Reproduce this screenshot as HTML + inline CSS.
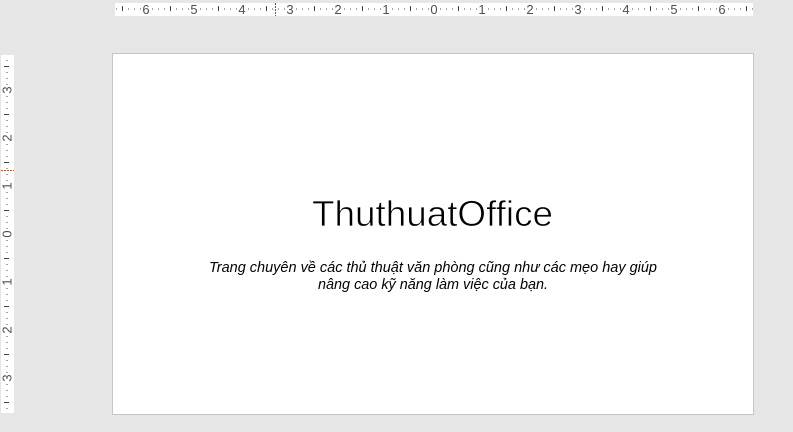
<!DOCTYPE html>
<html lang="vi">
<head>
<meta charset="utf-8">
<title>ThuthuatOffice</title>
<style>
html,body{margin:0;padding:0;width:793px;height:432px;overflow:hidden;background:#e6e6e6}
svg{display:block}
.n{font:13px "Liberation Sans",sans-serif;fill:#4f4f4f;text-anchor:middle}
.t{font-family:"Liberation Sans",sans-serif;fill:#000}
</style>
</head>
<body>
<svg width="793" height="432" viewBox="0 0 793 432" xmlns="http://www.w3.org/2000/svg">
  <rect width="793" height="432" fill="#e6e6e6"/>

  <!-- horizontal ruler -->
  <rect x="115" y="3" width="638" height="13" fill="#fff"/>
  <line x1="116" y1="9" x2="753" y2="9" stroke="#a6a6a6" stroke-width="2" stroke-dasharray="1 5 1 5 1 11" stroke-dashoffset="12"/>
  <line x1="122" y1="8.5" x2="753" y2="8.5" stroke="#444" stroke-width="5" stroke-dasharray="1 47"/>
  <text class="n" x="146" y="14">6</text>
  <text class="n" x="194" y="14">5</text>
  <text class="n" x="242" y="14">4</text>
  <text class="n" x="290" y="14">3</text>
  <text class="n" x="338" y="14">2</text>
  <text class="n" x="386" y="14">1</text>
  <text class="n" x="434" y="14">0</text>
  <text class="n" x="482" y="14">1</text>
  <text class="n" x="530" y="14">2</text>
  <text class="n" x="578" y="14">3</text>
  <text class="n" x="626" y="14">4</text>
  <text class="n" x="674" y="14">5</text>
  <text class="n" x="722" y="14">6</text>
  <line x1="275.5" y1="3" x2="275.5" y2="16" stroke="#c0392b" stroke-width="1" stroke-dasharray="2 1"/>

  <!-- vertical ruler -->
  <rect x="1" y="55" width="13" height="358" fill="#fff"/>
  <line x1="7" y1="60" x2="7" y2="413" stroke="#a6a6a6" stroke-width="2" stroke-dasharray="1 5 1 5 1 11" stroke-dashoffset="12"/>
  <line x1="4" y1="66.5" x2="9" y2="66.5" stroke="#444"/>
  <line x1="4" y1="114.5" x2="9" y2="114.5" stroke="#444"/>
  <line x1="4" y1="162.5" x2="9" y2="162.5" stroke="#444"/>
  <line x1="4" y1="210.5" x2="9" y2="210.5" stroke="#444"/>
  <line x1="4" y1="258.5" x2="9" y2="258.5" stroke="#444"/>
  <line x1="4" y1="306.5" x2="9" y2="306.5" stroke="#444"/>
  <line x1="4" y1="354.5" x2="9" y2="354.5" stroke="#444"/>
  <line x1="4" y1="402.5" x2="9" y2="402.5" stroke="#444"/>
  <text class="n" transform="translate(11.5 90) rotate(-90)">3</text>
  <text class="n" transform="translate(11.5 138) rotate(-90)">2</text>
  <text class="n" transform="translate(11.5 186) rotate(-90)">1</text>
  <text class="n" transform="translate(11.5 234) rotate(-90)">0</text>
  <text class="n" transform="translate(11.5 282) rotate(-90)">1</text>
  <text class="n" transform="translate(11.5 330) rotate(-90)">2</text>
  <text class="n" transform="translate(11.5 378) rotate(-90)">3</text>
  <line x1="1" y1="170.5" x2="14" y2="170.5" stroke="#c9533a" stroke-width="1" stroke-dasharray="2 1"/>

  <!-- slide -->
  <rect x="112.5" y="53.5" width="641" height="361" fill="#fff" stroke="#c6c6c6" stroke-width="1"/>
  <text class="t" x="312" y="226" font-size="36" textLength="241" lengthAdjust="spacingAndGlyphs" stroke="#fff" stroke-width="0.7">ThuthuatOffice</text>
  <text class="t" x="209" y="272" font-size="14.5" font-style="italic" textLength="448" lengthAdjust="spacingAndGlyphs">Trang chuyên về các thủ thuật văn phòng cũng như các mẹo hay giúp</text>
  <text class="t" x="318" y="289" font-size="14.5" font-style="italic" textLength="230" lengthAdjust="spacingAndGlyphs">nâng cao kỹ năng làm việc của bạn.</text>
</svg>
</body>
</html>
